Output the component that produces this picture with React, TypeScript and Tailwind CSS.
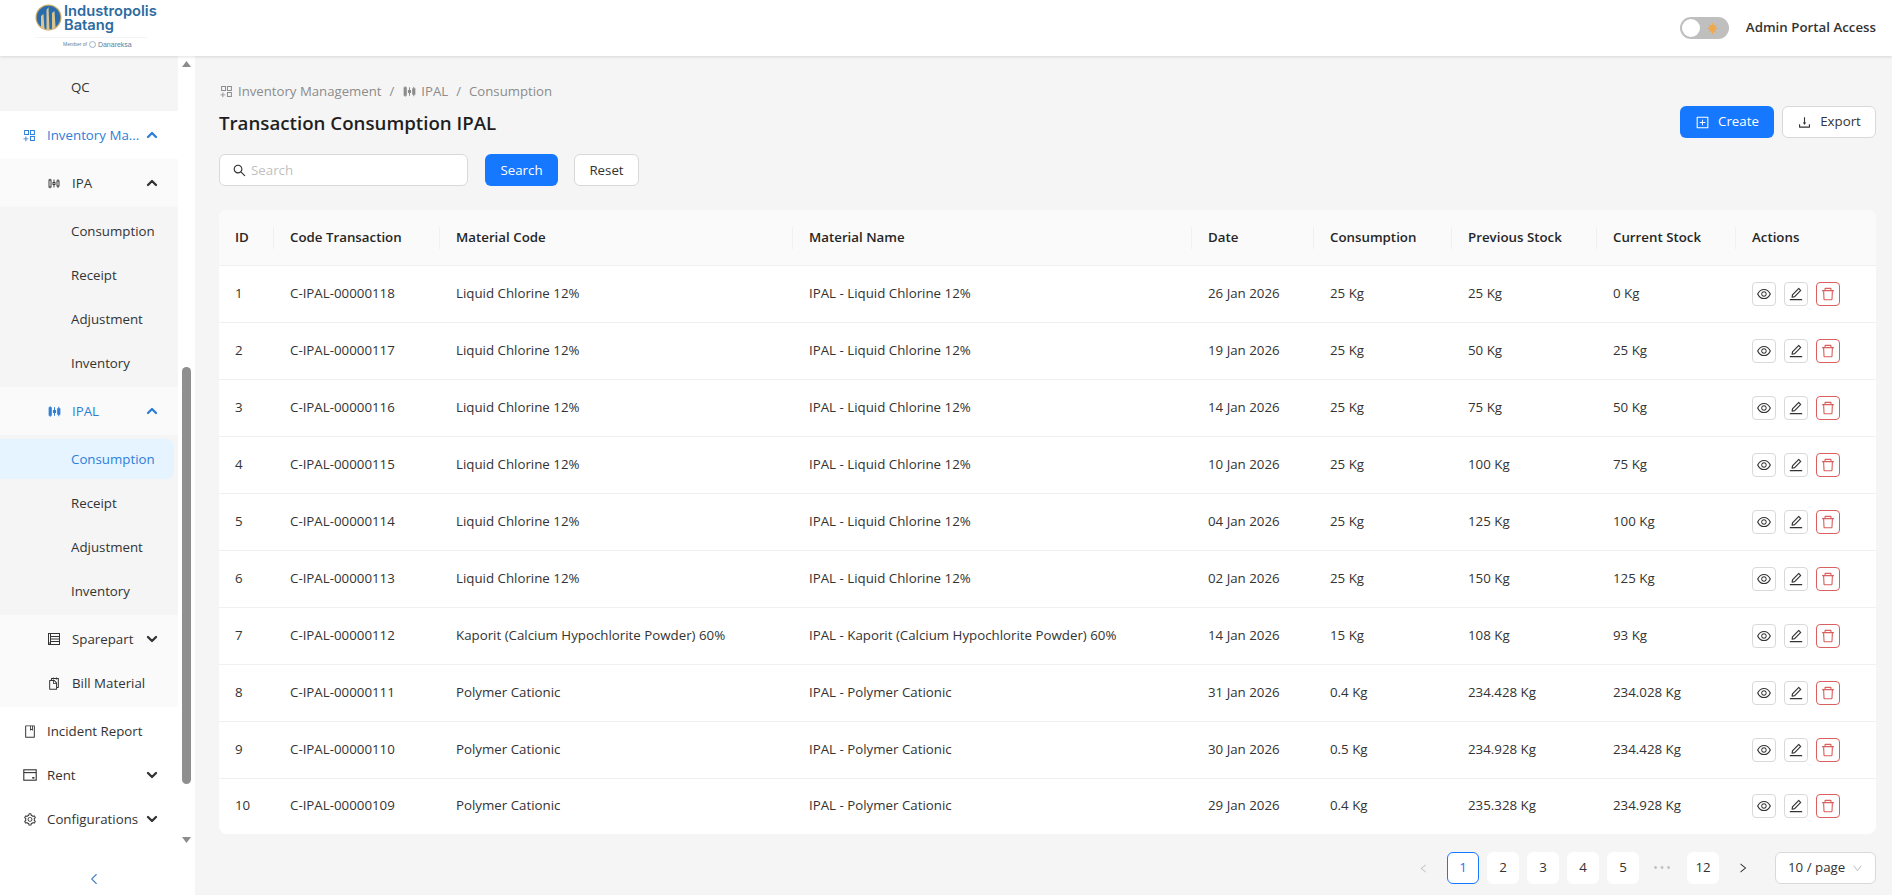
import type { ReactNode } from "react";
import {
  AiFillSliders,
  AiOutlineAppstoreAdd,
  AiOutlineBook,
  AiOutlineDelete,
  AiOutlineDown,
  AiOutlineDownload,
  AiOutlineEdit,
  AiOutlineEye,
  AiOutlineLeft,
  AiOutlinePlusSquare,
  AiOutlineRight,
  AiOutlineSearch,
  AiOutlineSetting,
  AiOutlineSliders,
  AiOutlineSnippets,
} from "react-icons/ai";
import { ChevronDown, ChevronLeft, ChevronUp } from "lucide-react";

const rows = [
  ["1", "C-IPAL-00000118", "Liquid Chlorine 12%", "IPAL - Liquid Chlorine 12%", "26 Jan 2026", "25 Kg", "25 Kg", "0 Kg"],
  ["2", "C-IPAL-00000117", "Liquid Chlorine 12%", "IPAL - Liquid Chlorine 12%", "19 Jan 2026", "25 Kg", "50 Kg", "25 Kg"],
  ["3", "C-IPAL-00000116", "Liquid Chlorine 12%", "IPAL - Liquid Chlorine 12%", "14 Jan 2026", "25 Kg", "75 Kg", "50 Kg"],
  ["4", "C-IPAL-00000115", "Liquid Chlorine 12%", "IPAL - Liquid Chlorine 12%", "10 Jan 2026", "25 Kg", "100 Kg", "75 Kg"],
  ["5", "C-IPAL-00000114", "Liquid Chlorine 12%", "IPAL - Liquid Chlorine 12%", "04 Jan 2026", "25 Kg", "125 Kg", "100 Kg"],
  ["6", "C-IPAL-00000113", "Liquid Chlorine 12%", "IPAL - Liquid Chlorine 12%", "02 Jan 2026", "25 Kg", "150 Kg", "125 Kg"],
  ["7", "C-IPAL-00000112", "Kaporit (Calcium Hypochlorite Powder) 60%", "IPAL - Kaporit (Calcium Hypochlorite Powder) 60%", "14 Jan 2026", "15 Kg", "108 Kg", "93 Kg"],
  ["8", "C-IPAL-00000111", "Polymer Cationic", "IPAL - Polymer Cationic", "31 Jan 2026", "0.4 Kg", "234.428 Kg", "234.028 Kg"],
  ["9", "C-IPAL-00000110", "Polymer Cationic", "IPAL - Polymer Cationic", "30 Jan 2026", "0.5 Kg", "234.928 Kg", "234.428 Kg"],
  ["10", "C-IPAL-00000109", "Polymer Cationic", "IPAL - Polymer Cationic", "29 Jan 2026", "0.4 Kg", "235.328 Kg", "234.928 Kg"],
];

const headers = ["ID", "Code Transaction", "Material Code", "Material Name", "Date", "Consumption", "Previous Stock", "Current Stock", "Actions"];

function SparepartIcon() {
  return (
    <svg width="14" height="14" viewBox="0 0 14 14" fill="none" stroke="currentColor" strokeWidth="1">
      <rect x="1.5" y="1.5" width="11" height="11" />
      <path d="M3.5 1.5v11M3.5 4.5h9M3.5 7h9M3.5 9.5h9M1.5 11h2" />
    </svg>
  );
}

function RentIcon() {
  return (
    <svg width="14" height="14" viewBox="0 0 14 14" fill="none" stroke="currentColor" strokeWidth="1.1">
      <rect x="0.8" y="1.8" width="12.4" height="10.4" />
      <path d="M0.8 4.6h12.4" />
      <rect x="9.2" y="9" width="2.2" height="1.6" fill="currentColor" stroke="none" />
    </svg>
  );
}

function Logo() {
  return (
    <div className="flex flex-col w-[178px] h-[56px] pl-[35px]">
      <div className="flex items-center gap-[2px] pt-[3px]">
        <svg width="27" height="27" viewBox="0 0 27 27">
          <circle cx="13.5" cy="13.5" r="13" fill="#c9a866" />
          <circle cx="13.5" cy="13.5" r="11.8" fill="#2a6cab" />
          <path d="M6 25V12l2.5-2 1 15zM11.5 26V6l2-3 1 23zM17 26V9l2.5-2 1 16z" fill="#d9c48f" />
        </svg>
        <div className="flex flex-col pt-[2px] text-[#2c6aa0] font-['Inter',sans-serif] font-semibold text-[14.7px] leading-[13.5px]">
          <span>Industropolis</span>
          <span>Batang</span>
        </div>
      </div>
      <div className="mt-[5px] w-[112px] border-t border-[#f4f4f4]" />
      <div className="mt-[2px] ml-[28px] text-[5px] leading-[9px] text-[#5b7f9e] font-['Liberation_Sans',sans-serif] flex items-center gap-[2px]">
        <span>Member of</span>
        <span className="w-[7px] h-[7px] rounded-full border border-[#9fb4c5] inline-block" />
        <span className="text-[7px]">Danareksa</span>
      </div>
    </div>
  );
}

function Arrow({ dir }: { dir: "up" | "down" }) {
  return dir === "up" ? (
    <ChevronUp size={16} strokeWidth={3.5} className="shrink-0 -mr-[4px]" />
  ) : (
    <ChevronDown size={16} strokeWidth={3.5} className="shrink-0 -mr-[4px]" />
  );
}

function MenuRow({
  icon,
  label,
  level = 0,
  arrow,
}: {
  icon?: ReactNode;
  label: string;
  level?: 0 | 1 | 2;
  arrow?: "up" | "down";
}) {
  return (
    <div
      className={`h-10 flex items-center shrink-0 ${level === 0 ? "pl-[23px]" : level === 1 ? "pl-[47px]" : "pl-[71px]"} pr-[22px] text-[#333333]`}
    >
      {icon && (
        <span className={`w-[14px] h-[14px] flex items-center justify-center text-[15px] ${level === 1 ? "mr-[11px]" : "mr-[10px]"}`}>{icon}</span>
      )}
      <span className="flex-1 truncate pt-px">{label}</span>
      {arrow && <Arrow dir={arrow} />}
    </div>
  );
}

function Sidebar() {
  return (
    <aside className="w-[195px] shrink-0 bg-white flex">
      <div className="w-[178px] flex flex-col">
        <nav className="flex flex-col gap-1">
          <div className="h-[55px] flex flex-col justify-end pb-1 bg-[#f5f5f5]">
            <MenuRow label="QC" level={2} />
          </div>
          <div className="h-10 flex items-center pl-[23px] pr-[22px] text-[#2f7ed8]">
            <AiOutlineAppstoreAdd className="text-[15px] mr-[10px] -ml-[1px] shrink-0" />
            <span className="flex-1 pt-px">Inventory Ma...</span>
            <Arrow dir="up" />
          </div>
          <div className="flex flex-col gap-1 py-1 bg-[#fafafa]">
            <MenuRow level={1} icon={<AiOutlineSliders />} label="IPA" arrow="up" />
            <div className="flex flex-col gap-1 py-1 bg-[#f5f5f5]">
              <MenuRow level={2} label="Consumption" />
              <MenuRow level={2} label="Receipt" />
              <MenuRow level={2} label="Adjustment" />
              <MenuRow level={2} label="Inventory" />
            </div>
            <div className="h-10 flex items-center pl-[47px] pr-[22px] text-[#2f7ed8]">
              <AiFillSliders className="text-[15px] mr-[10px] shrink-0" />
              <span className="flex-1 pt-px">IPAL</span>
              <Arrow dir="up" />
            </div>
            <div className="flex flex-col gap-1 py-1 bg-[#f5f5f5]">
              <div className="h-10 flex items-center pl-[71px] pt-px mr-[4px] rounded-r-lg bg-[#e6f4ff] text-[#2f7ed8]">Consumption</div>
              <MenuRow level={2} label="Receipt" />
              <MenuRow level={2} label="Adjustment" />
              <MenuRow level={2} label="Inventory" />
            </div>
            <MenuRow level={1} icon={<SparepartIcon />} label="Sparepart" arrow="down" />
            <MenuRow level={1} icon={<AiOutlineSnippets />} label="Bill Material" />
          </div>
          <MenuRow icon={<AiOutlineBook />} label="Incident Report" />
          <MenuRow icon={<RentIcon />} label="Rent" arrow="down" />
          <MenuRow icon={<AiOutlineSetting />} label="Configurations" arrow="down" />
        </nav>
        <div className="flex-1 flex items-center justify-center pt-[24px] pl-[12px] text-[#4a84c4]">
          <ChevronLeft size={18} strokeWidth={1.5} className="-ml-[2px]" />
        </div>
      </div>
      <div className="w-[17px] flex flex-col items-start pl-[4px] pt-[5px]">
        <div className="w-[9px] flex flex-col items-center">
          <svg width="9" height="6" viewBox="0 0 9 6" className="shrink-0">
            <path d="M4.5 0L9 6H0z" fill="#8c8c8c" />
          </svg>
          <div className="w-[9px] h-[417px] mt-[300px] rounded-md bg-[#8f8f8f]" />
          <svg width="9" height="6" viewBox="0 0 9 6" className="shrink-0 mt-[53px]">
            <path d="M0 0h9L4.5 6z" fill="#8c8c8c" />
          </svg>
        </div>
      </div>
    </aside>
  );
}

function Actions() {
  return (
    <div className="flex gap-2">
      <span className="w-6 h-6 rounded border border-[#d9d9d9] flex items-center justify-center text-[16px] text-[#333333]">
        <AiOutlineEye />
      </span>
      <span className="w-6 h-6 rounded border border-[#d9d9d9] flex items-center justify-center text-[16px] text-[#333333]">
        <AiOutlineEdit />
      </span>
      <span className="w-6 h-6 rounded border border-[#d9605f] flex items-center justify-center text-[16px] text-[#d9605f]">
        <AiOutlineDelete />
      </span>
    </div>
  );
}

function Pagination() {
  const pageClass = "w-8 h-8 rounded-md bg-white flex items-center justify-center text-[#333333]";
  return (
    <div className="mt-[18px] flex justify-end items-center gap-2">
      <span className="w-8 h-8 flex items-center justify-center text-[11px] text-[#bfbfbf]">
        <AiOutlineLeft />
      </span>
      <span className="w-8 h-8 rounded-md bg-white border border-[#1677ff] flex items-center justify-center text-[#1677ff]">1</span>
      <span className={pageClass}>2</span>
      <span className={pageClass}>3</span>
      <span className={pageClass}>4</span>
      <span className={pageClass}>5</span>
      <span className="w-8 h-8 flex items-center justify-center text-[#bfbfbf] tracking-[2px] text-[12px]">•••</span>
      <span className={pageClass}>12</span>
      <span className="w-8 h-8 flex items-center justify-center text-[12px] text-[#333333]">
        <AiOutlineRight />
      </span>
      <span className="ml-2 w-[101px] h-8 rounded-md border border-[#d9d9d9] bg-white flex items-center justify-between pl-3 pr-3 text-[#333333]">
        10 / page
        <AiOutlineDown className="text-[11px] text-[#c4c4c4]" />
      </span>
    </div>
  );
}

export default function App() {
  return (
    <div className="h-screen w-full overflow-hidden flex flex-col bg-[#f5f5f5] font-['Open_Sans',sans-serif] text-[13.3px] text-[#333333]">
      <header className="h-14 shrink-0 bg-white shadow-[0_1px_3px_rgba(0,0,0,0.12)] flex items-center justify-between pr-4 relative z-10">
        <Logo />
        <div className="flex items-center gap-[17px]">
          <div className="w-[49px] h-[22px] rounded-full bg-[#bfbfbf] flex items-center justify-between pl-[2px] pr-[11px]">
            <span className="w-[18px] h-[18px] rounded-full bg-white" />
            <svg width="11" height="11" viewBox="0 0 11 11">
              <circle cx="5.5" cy="5.5" r="3.4" fill="#f0a84a" />
              <path d="M5.5 0v2M5.5 9v2M0 5.5h2M9 5.5h2M1.6 1.6l1.3 1.3M8.1 8.1l1.3 1.3M1.6 9.4l1.3-1.3M8.1 2.9l1.3-1.3" stroke="#f0a84a" strokeWidth="1" />
            </svg>
          </div>
          <span className="font-semibold text-[#333333]">Admin Portal Access</span>
        </div>
      </header>
      <div className="flex flex-1 min-h-0">
        <Sidebar />
        <main className="flex-1 min-w-0 pl-6 pr-4 pt-6">
          <div className="h-[22px] flex items-center text-[#8c8c8c] text-[13.2px] pt-px">
            <AiOutlineAppstoreAdd className="text-[15px] mr-[4px]" />
            <span>Inventory Management</span>
            <span className="mx-[8px]">/</span>
            <AiFillSliders className="text-[15px] mr-[4px]" />
            <span>IPAL</span>
            <span className="mx-[8px]">/</span>
            <span>Consumption</span>
          </div>
          <div className="mt-1 h-8 flex items-center justify-between">
            <h1 className="text-[18.7px] font-semibold text-[#1f1f1f] pt-[2px]">Transaction Consumption IPAL</h1>
            <div className="flex gap-2">
              <button className="w-[94px] h-8 rounded-md bg-[#1677ff] text-white flex items-center justify-center gap-2">
                <AiOutlinePlusSquare className="text-[15px]" />
                Create
              </button>
              <button className="w-[94px] h-8 rounded-md bg-white text-[#333333] border border-[#d9d9d9] flex items-center justify-center gap-2">
                <AiOutlineDownload className="text-[15px]" />
                Export
              </button>
            </div>
          </div>
          <div className="mt-4 flex items-center">
            <div className="w-[249px] h-8 rounded-md bg-white border border-[#d9d9d9] flex items-center pl-3 gap-1">
              <AiOutlineSearch className="text-[15px] text-[#333333]" />
              <span className="text-[#bfbfbf] pt-px">Search</span>
            </div>
            <button className="ml-[17px] w-[73px] h-8 rounded-md bg-[#1677ff] text-white pt-px">Search</button>
            <button className="ml-4 w-[65px] h-8 rounded-md bg-white border border-[#d9d9d9] text-[#333333] pt-px">Reset</button>
          </div>
          <div className="mt-6 rounded-lg overflow-hidden bg-white">
            <table className="w-full table-fixed border-collapse">
              <colgroup>
                <col className="w-[55px]" />
                <col className="w-[166px]" />
                <col className="w-[353px]" />
                <col className="w-[399px]" />
                <col className="w-[122px]" />
                <col className="w-[138px]" />
                <col className="w-[145px]" />
                <col className="w-[139px]" />
                <col className="w-[141px]" />
              </colgroup>
              <thead>
                <tr className="h-[55px] bg-[#fafafa] border-b border-[#f0f0f0]">
                  {headers.map((h, i) => (
                    <th key={h} className="px-4 pt-px text-left font-semibold text-[#262626] relative">
                      {h}
                      {i < headers.length - 1 && <span className="absolute right-0 top-[17px] h-[22px] w-px bg-[#f0f0f0]" />}
                    </th>
                  ))}
                </tr>
              </thead>
              <tbody>
                {rows.map((r, i) => (
                  <tr key={r[0]} className={i < rows.length - 1 ? "h-[57px] border-b border-[#f0f0f0]" : "h-[56px]"}>
                    {r.map((c, j) => (
                      <td key={j} className="px-4 text-[#333333] whitespace-nowrap">
                        {c}
                      </td>
                    ))}
                    <td className="px-4">
                      <Actions />
                    </td>
                  </tr>
                ))}
              </tbody>
            </table>
          </div>
          <Pagination />
        </main>
      </div>
    </div>
  );
}
